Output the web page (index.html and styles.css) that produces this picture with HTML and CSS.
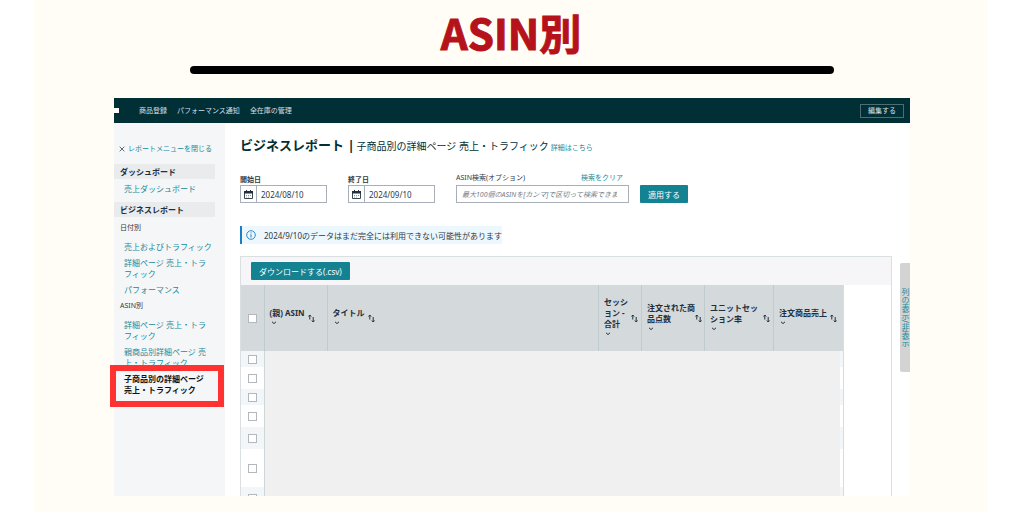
FILE: index.html
```html
<!DOCTYPE html>
<html lang="ja">
<head>
<meta charset="utf-8">
<title>ASIN別 ビジネスレポート</title>
<link rel="stylesheet" href="styles.css">
</head>
<body>
<svg class="defs" aria-hidden="true">
  <symbol id="sort" viewBox="0 0 7 9"><path d="M1.8 5.5V1M.4 2.5 1.8 1 3.2 2.5M5.2 3v5M3.8 6.5 5.2 8 6.6 6.5" fill="none" stroke="#232f3e"/></symbol>
  <symbol id="chevron" viewBox="0 0 6 4"><path d="M1 .8 3 2.6 5 .8" fill="none" stroke="#232f3e"/></symbol>
  <symbol id="calendar" viewBox="0 0 9 9"><path d="M.5 1.5h8v7h-8z" fill="none" stroke="#3b4653"/><path d="M0 1h9v2.6H0zM2 0h1v2H2zM6 0h1v2H6z" fill="#232f3e"/><path d="M2 5h1v1H2zM4 5h1v1H4zM6 5h1v1H6zM2 6.8h1v.8H2zM4 6.8h1v.8H4z" fill="#8a929b"/></symbol>
</svg>
<div class="canvas">
  <h1 class="title">ASIN別</h1>
  <hr class="rule">
  <div class="app">
    <header class="topbar">
      <span class="mark"></span>
      <nav class="topnav">
        <a href="#">商品登録</a>
        <a href="#">パフォーマンス通知</a>
        <a href="#">全在庫の管理</a>
      </nav>
      <button class="edit" type="button">編集する</button>
    </header>
    <div class="body">
      <aside class="sidebar">
        <div class="close"><svg width="6" height="6" viewBox="0 0 6 6"><path d="M.7.7l4.6 4.6M5.3.7.7 5.3" stroke="#3b4653" stroke-width=".8"/></svg><a href="#">レポートメニューを閉じる</a></div>
        <h2 class="band">ダッシュボード</h2>
        <ul class="links tight"><li><a href="#">売上ダッシュボード</a></li></ul>
        <h2 class="band">ビジネスレポート</h2>
        <h3 class="group">日付別</h3>
        <ul class="links">
          <li><a href="#">売上およびトラフィック</a></li>
          <li><a href="#">詳細ページ 売上・トラ<br>フィック</a></li>
          <li><a href="#">パフォーマンス</a></li>
        </ul>
        <h3 class="group">ASIN別</h3>
        <ul class="links">
          <li><a href="#">詳細ページ 売上・トラ<br>フィック</a></li>
          <li><a href="#">親商品別詳細ページ 売<br>上・トラフィック</a></li>
          <li class="current"><a href="#" aria-current="page">子商品別の詳細ページ<br>売上・トラフィック</a></li>
        </ul>
      </aside>
      <main class="main">
        <div class="heading">
          <h2>ビジネスレポート |</h2>
          <span class="sub">子商品別の詳細ページ 売上・トラフィック</span>
          <a href="#">詳細はこちら</a>
        </div>
        <form class="filters">
          <div class="field">
            <label class="strong" for="start">開始日</label>
            <div class="date"><svg width="9" height="9"><use href="#calendar"/></svg><input id="start" type="text" value="2024/08/10"></div>
          </div>
          <div class="field">
            <label class="strong" for="end">終了日</label>
            <div class="date"><svg width="9" height="9"><use href="#calendar"/></svg><input id="end" type="text" value="2024/09/10"></div>
          </div>
          <div class="search">
            <div class="search-head"><label for="asin">ASIN検索(オプション)</label><a href="#">検索をクリア</a></div>
            <input id="asin" type="text" placeholder="最大100個のASINを[カンマ]で区切って検索できます">
          </div>
          <button class="primary apply" type="button">適用する</button>
        </form>
        <div class="notice"><svg width="10" height="10" viewBox="0 0 10 10"><circle cx="5" cy="5" r="4.3" fill="none" stroke="#1a7fc4" stroke-width=".9"/><path d="M5 4.3v3.2M5 2.4v1" stroke="#1a7fc4"/></svg>2024/9/10のデータはまだ完全には利用できない可能性があります</div>
        <div class="results">
          <section class="panel">
            <div class="toolbar"><button class="primary" type="button">ダウンロードする(.csv)</button></div>
            <div class="scroll">
            <table class="grid">
              <colgroup><col class="c-check"><col class="c-asin"><col><col class="c-sess"><col class="c-units"><col class="c-rate"><col class="c-sales"><col class="c-edge"></colgroup>
              <thead>
                <tr>
                  <th class="check"><input type="checkbox" aria-label="すべて選択"></th>
                  <th><div class="head"><span>(親) ASIN<svg class="chev"><use href="#chevron"/></svg></span><svg class="sort"><use href="#sort"/></svg></div></th>
                  <th><div class="head"><span>タイトル<svg class="chev"><use href="#chevron"/></svg></span><svg class="sort"><use href="#sort"/></svg></div></th>
                  <th><div class="head spread"><span>セッシ<br>ョン -<br>合計<svg class="chev"><use href="#chevron"/></svg></span><svg class="sort"><use href="#sort"/></svg></div></th>
                  <th><div class="head spread"><span>注文された商<br>品点数<svg class="chev"><use href="#chevron"/></svg></span><svg class="sort"><use href="#sort"/></svg></div></th>
                  <th><div class="head spread"><span>ユニットセッ<br>ション率<svg class="chev"><use href="#chevron"/></svg></span><svg class="sort"><use href="#sort"/></svg></div></th>
                  <th colspan="2"><div class="head"><span>注文商品売上<svg class="chev"><use href="#chevron"/></svg></span><svg class="sort"><use href="#sort"/></svg></div></th>
                </tr>
              </thead>
              <tbody>
                <tr class="short"><td class="check"><input type="checkbox" aria-label="行 1"></td><td class="blank" colspan="6" rowspan="7"></td><td></td></tr>
                <tr><td class="check"><input type="checkbox" aria-label="行 2"></td><td></td></tr>
                <tr class="short"><td class="check"><input type="checkbox" aria-label="行 3"></td><td></td></tr>
                <tr><td class="check"><input type="checkbox" aria-label="行 4"></td><td></td></tr>
                <tr><td class="check"><input type="checkbox" aria-label="行 5"></td><td></td></tr>
                <tr class="tall"><td class="check"><input type="checkbox" aria-label="行 6"></td><td></td></tr>
                <tr><td class="check"><input type="checkbox" aria-label="行 7"></td><td></td></tr>
              </tbody>
            </table>
            </div>
          </section>
          <button class="columns" type="button">列の表示/非表示</button>
        </div>
      </main>
    </div>
  </div>
</div>
</body>
</html>
```

FILE: styles.css
```css
* { box-sizing: border-box; }

body {
  margin: 0;
  background: #fff;
  color: #2f3a46;
  font: 8px/11px "Noto Sans", "Noto Sans CJK JP", sans-serif;
}

h1, h2, h3, ul { margin: 0; padding: 0; font-size: inherit; }
ul { list-style: none; }
a { color: #1a8a98; text-decoration: none; }
button, input { font: inherit; margin: 0; }
button { cursor: pointer; white-space: nowrap; }
svg { flex: none; }
.defs { position: absolute; width: 0; height: 0; }

.canvas {
  display: flex;
  flex-direction: column;
  height: 100vh;
  margin: 0 36px 0 34px;
  padding: 0 78px 16px 80px;
  background: #fffdf5;
}

.title {
  padding: 4px 2px 2px 0;
  color: #b5121b;
  font: 700 42px/56px "Noto Sans CJK JP", sans-serif;
  text-align: center;
  -webkit-text-stroke: 1px #b5121b;
}

.rule {
  width: 81%;
  height: 8px;
  margin: 4px auto 24px;
  border: 0;
  border-radius: 4px;
  background: #000;
}

.app { display: flex; flex: 1; flex-direction: column; min-height: 0; background: #fff; }

.topbar {
  display: flex;
  flex: none;
  align-items: center;
  height: 25px;
  padding-right: 6px;
  background: #002f36;
  font-size: 7px;
}
.mark { width: 5px; height: 5px; margin-right: 20px; background: #fff; }
.topnav { display: flex; flex: 1; gap: 10px; }
.topnav a { color: #d5dfe0; }
.edit {
  height: 14px;
  padding: 0 7px;
  border: 1px solid #4d6d72;
  background: none;
  color: #d5dfe0;
  line-height: 11px;
}

.body { display: flex; flex: 1; min-height: 0; }

.sidebar {
  flex: none;
  width: 111px;
  padding: 20px 10px 0 0;
  background: #f5f6f8;
  white-space: nowrap;
}
.close {
  display: flex;
  align-items: center;
  gap: 3px;
  margin-bottom: 10px;
  padding-left: 5px;
  font-size: 7px;
}
.band {
  padding-left: 6px;
  background: #e9ebed;
  color: #232f3e;
  line-height: 15px;
}
.group { margin-top: 5px; padding-left: 6px; font-size: 7px; font-weight: 400; }
.links { display: grid; gap: 5px; padding: 8px 0 0 10px; }
.tight { padding: 4px 0 8px 10px; }
.current { position: relative; z-index: 1; font-weight: 700; }
.current a { color: #111; }
.current::before {
  content: "";
  position: absolute;
  z-index: -1;
  inset: -8px -9px -12px -14px;
  border: 6px solid #ff3131;
  background: #f5f6f8;
}

.main {
  display: flex;
  flex: 1;
  flex-direction: column;
  min-width: 0;
  padding: 13px 0 0 15px;
}

.heading { display: flex; align-items: baseline; gap: 2px; color: #002f36; line-height: 18px; }
.heading h2 { font-size: 13px; }
.heading a { font-size: 7px; }
.sub { font-size: 10px; }

.filters { display: flex; align-items: flex-end; gap: 21px; margin-top: 15px; font-size: 7px; }
.field { width: 87px; }
.strong { display: block; font-weight: 700; }
.date { display: flex; align-items: center; height: 18px; border: 1px solid #a9afb8; font-size: 8px; }
.date svg { margin: 0 3px; }
.date input {
  width: 100%;
  min-width: 0;
  height: 16px;
  padding: 0 4px;
  border: 0;
  border-left: 1px solid #a9afb8;
  background: none;
  color: #2f3a46;
}
.search { width: 173px; }
.search-head { display: flex; justify-content: space-between; padding: 0 6px 2px 0; }
.search input {
  display: block;
  width: 100%;
  height: 18px;
  padding: 0 11px 0 5px;
  border: 1px solid #a9afb8;
  background: #fff;
}
.search input::placeholder { color: #737c86; font-style: italic; opacity: 1; }

.primary {
  height: 18px;
  padding: 0 8px;
  border: 0;
  border-radius: 1px;
  background: #158292;
  color: #fff;
  font-size: 8px;
}
.apply { margin-left: -10px; }

.notice {
  display: flex;
  align-items: center;
  align-self: flex-start;
  height: 18px;
  margin: 23px 0 12px;
  border-left: 2px solid #1a7fc4;
  background: #edf7fe;
}
.notice svg { margin: 0 8px 0 4px; }

.results { display: flex; flex: 1; gap: 8px; min-height: 0; }
.panel {
  flex: 1;
  min-width: 0;
  overflow: hidden;
  border: 1px solid #dadfe2;
  border-bottom: 0;
}
.toolbar { padding: 5px 10px; background: #f6f6f9; }
.scroll { padding-right: 47px; }

.grid { width: 100%; border-collapse: collapse; table-layout: fixed; border-right: 1px solid #d5dddf; }
.c-check { width: 23px; }
.c-asin { width: 63px; }
.c-sess { width: 43px; }
.c-units { width: 63px; }
.c-rate { width: 69px; }
.c-sales { width: 66px; }
.c-edge { width: 4px; }
.grid th {
  height: 66px;
  padding: 0 3px 0 5px;
  border-left: 1px solid #bfcbce;
  background: #d4dadb;
  color: #232f3e;
  text-align: left;
  white-space: nowrap;
}
.grid .check { padding: 0; border-left: 0; text-align: center; }
.head { display: flex; align-items: center; gap: 3px; }
.spread { justify-content: space-between; gap: 0; }
.sort { width: 7px; height: 9px; }
.chev { display: block; width: 6px; height: 4px; margin: 3px 0 4px 1px; }

.grid td { height: 22px; padding: 0; }
.grid .short td { height: 16px; }
.grid .tall td { height: 38px; }
.grid tbody tr:nth-child(odd) { background: #f3f6f9; }
.grid .blank { border-left: 1px solid #cfd6d9; background: #f0f0f0; }
.grid input {
  display: block;
  width: 9px;
  height: 9px;
  margin: 0 auto;
  appearance: none;
  border: 1px solid #b3b8bd;
  background: #fff;
}

.columns {
  align-self: flex-start;
  width: 10px;
  height: 109px;
  margin-top: 7px;
  padding: 0;
  border: 0;
  border-radius: 2px 0 0 2px;
  background: #d3d3d3;
  color: #1a8a98;
  line-height: 10px;
  writing-mode: vertical-rl;
}
```
